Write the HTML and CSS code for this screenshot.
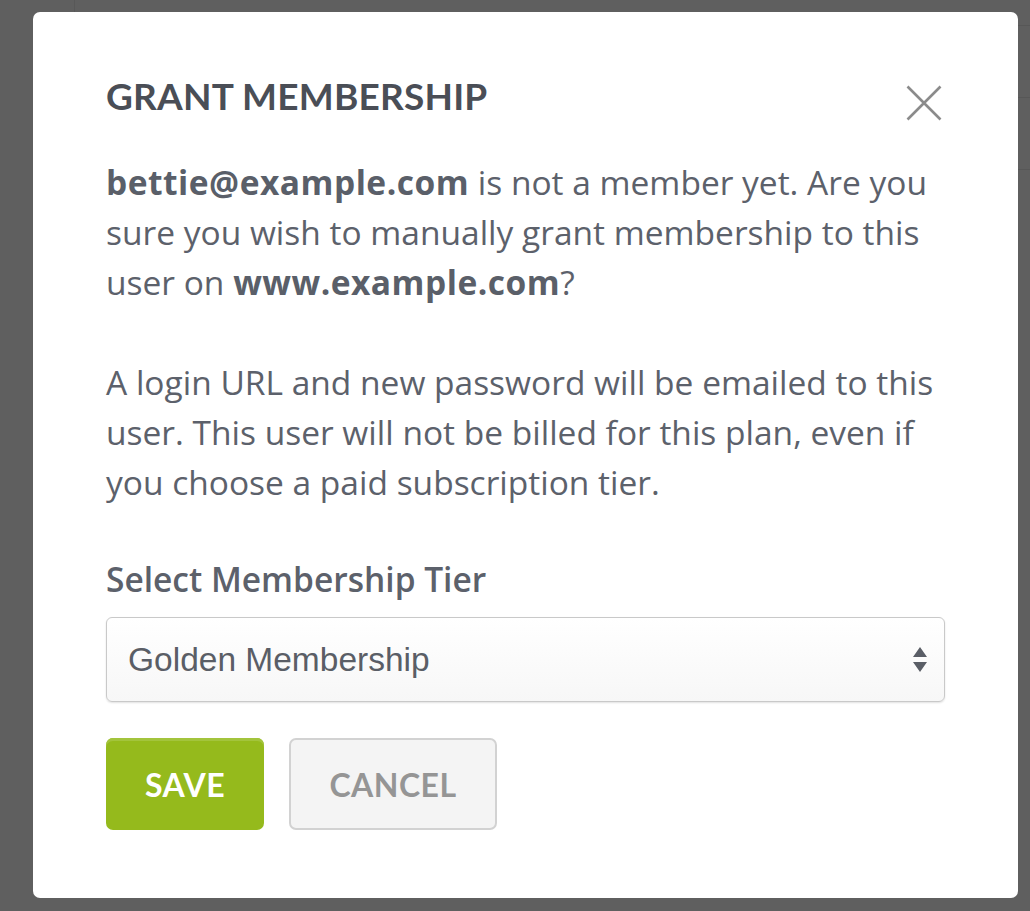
FILE: index.html
```html
<!DOCTYPE html>
<html lang="en">
<head>
<meta charset="utf-8">
<title>Grant Membership</title>
<link rel="stylesheet" href="styles.css">
</head>
<body>
<div class="backdrop">
  <div class="bg-page">
    <div class="bg-col"></div>
    <div class="bg-rows">
      <div class="bg-row"></div>
      <div class="bg-row"></div>
      <div class="bg-row"></div>
    </div>
  </div>
  <div class="modal">
    <div class="modal-head">
      <h1 class="title">GRANT MEMBERSHIP</h1>
      <button class="close" aria-label="Close">
        <svg width="36" height="36" viewBox="0 0 36 36"><path d="M1.5 1.5 L34.5 34.5 M34.5 1.5 L1.5 34.5" stroke="#8b8b8b" stroke-width="2.6" fill="none"/></svg>
      </button>
    </div>
    <p class="text text-first"><strong>bettie@example.com</strong> is not a member yet. Are you sure you wish to manually grant membership to this user on <strong>www.example.com</strong>?</p>
    <p class="text text-second">A login URL and new password will be emailed to this user. This user will not be billed for this plan, even if you choose a paid subscription tier.</p>
    <label class="label">Select Membership Tier</label>
    <div class="select">
      <span class="select-value">Golden Membership</span>
      <span class="arrows">
        <svg width="16" height="28" viewBox="0 0 16 28"><path d="M8 1 L15 11 L1 11 Z M1 16 L15 16 L8 26 Z" fill="#5a5e66"/></svg>
      </span>
    </div>
    <div class="actions">
      <button class="btn btn-save">SAVE</button>
      <button class="btn btn-cancel">CANCEL</button>
    </div>
  </div>
</div>
</body>
</html>
```
FILE: styles.css
```css
* { box-sizing: border-box; }
html, body { margin: 0; padding: 0; }
body {
  width: 1030px;
  height: 911px;
  overflow: hidden;
  background: #5f5f5f;
  font-family: "Open Sans", "Liberation Sans", sans-serif;
}
.backdrop {
  position: relative;
  width: 1030px;
  height: 911px;
  padding: 12px 12px 0 33px;
}
.bg-page {
  position: absolute;
  inset: 0;
  display: flex;
}
.bg-col {
  width: 75px;
  height: 12px;
  border-right: 1px solid #585858;
}
.bg-rows {
  margin-left: auto;
  width: 12px;
  padding-top: 25px;
  display: flex;
  flex-direction: column;
}
.bg-row {
  height: 72px;
  border-top: 1px solid #575757;
}
.modal {
  position: relative;
  width: 985px;
  height: 886px;
  background: #fff;
  border-radius: 7px;
  padding: 63px 73px 0 73px;
  color: #5c616b;
}
.modal-head {
  display: flex;
  justify-content: space-between;
  align-items: flex-start;
  height: 42px;
}
.title {
  margin: 0;
  font-family: "Lato", "Liberation Sans", sans-serif;
  font-weight: 700;
  font-size: 37px;
  line-height: 42px;
  color: #4a4e56;
  letter-spacing: 0.2px;
}
.close {
  border: 0;
  background: none;
  padding: 0;
  margin: 10px 3px 0 0;
  width: 36px;
  height: 36px;
  cursor: pointer;
  flex-shrink: 0;
}
.close svg { display: block; }
.text {
  margin: 0;
  font-size: 33.5px;
  line-height: 50px;
  color: #5c616b;
}
.text-first { margin-top: 40px; margin-bottom: 50px; }
.text-second { margin-bottom: 52px; }
.text strong { font-weight: 700; color: #5a5f69; letter-spacing: 0.5px; }
.label {
  display: block;
  font-size: 33.5px;
  font-weight: 600;
  line-height: 40px;
  color: #5c616b;
  margin-bottom: 18px;
}
.select {
  display: flex;
  align-items: center;
  justify-content: space-between;
  height: 85px;
  border: 1px solid #c9c9c9;
  border-radius: 6px;
  background: linear-gradient(#ffffff, #f7f7f7);
  box-shadow: 0 1px 2px rgba(0,0,0,0.12);
  padding: 0 16px 0 21px;
}
.select-value {
  font-family: "Liberation Sans", Arial, sans-serif;
  font-size: 33.5px;
  color: #5a5e66;
}
.arrows svg { display: block; }
.actions {
  display: flex;
  gap: 25px;
  margin-top: 36px;
}
.btn {
  font-family: "Lato", "Liberation Sans", sans-serif;
  font-weight: 700;
  font-size: 32px;
  height: 92px;
  border-radius: 7px;
  cursor: pointer;
  letter-spacing: 0.5px;
}
.btn-save {
  width: 158px;
  background: #95ba1c;
  border: 0;
  color: #fff;
  box-shadow: inset 0 3px 0 #a3c43c;
}
.btn-cancel {
  width: 208px;
  background: #f4f4f4;
  border: 2px solid #d2d2d2;
  color: #959595;
}
```
